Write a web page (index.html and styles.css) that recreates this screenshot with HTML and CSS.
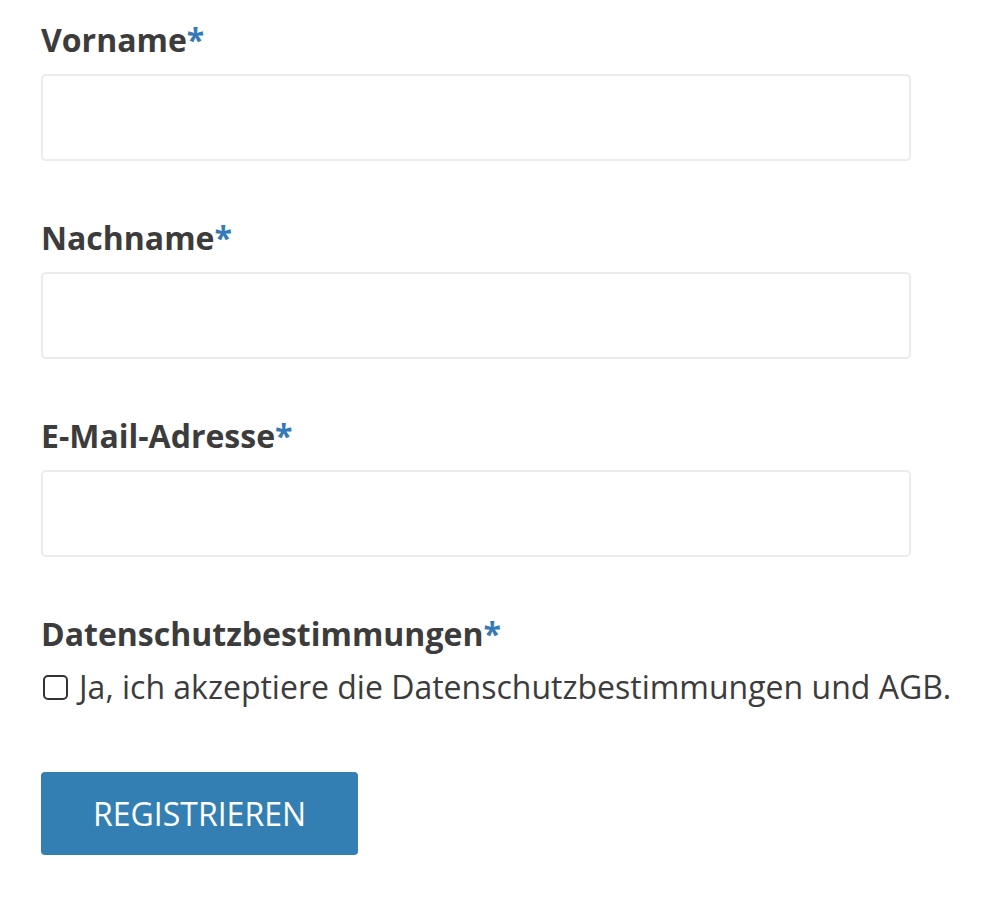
FILE: index.html
```html
<!DOCTYPE html>
<html lang="de">
<head>
<meta charset="utf-8">
<link rel="stylesheet" href="styles.css">
</head>
<body>
<form class="form">
  <div class="group">
    <label class="label">Vorname<span class="req">*</span></label>
    <input class="input" type="text">
  </div>
  <div class="group">
    <label class="label">Nachname<span class="req">*</span></label>
    <input class="input" type="text">
  </div>
  <div class="group">
    <label class="label">E-Mail-Adresse<span class="req">*</span></label>
    <input class="input" type="email">
  </div>
  <div class="group group-check">
    <div class="label">Datenschutzbestimmungen<span class="req">*</span></div>
    <label class="check"><span class="box"></span>Ja, ich akzeptiere die Datenschutzbestimmungen und AGB.</label>
  </div>
  <button class="btn" type="button">REGISTRIEREN</button>
</form>
</body>
</html>
```
FILE: styles.css
```css
html, body {
  margin: 0;
  padding: 0;
  background: #fff;
}
body {
  font-family: "Open Sans", "Liberation Sans", sans-serif;
  color: #3c3c3c;
}
.form {
  padding: 21px 0 0 41px;
  width: 870px;
}
.group {
  display: flex;
  flex-direction: column;
  margin-bottom: 58px;
}
.label {
  font-size: 32px;
  font-weight: 700;
  line-height: 38px;
  margin-bottom: 15px;
}
.req {
  color: #337ab7;
}
.input {
  box-sizing: border-box;
  height: 87px;
  width: 870px;
  border: 2px solid #ebebeb;
  border-radius: 5px;
  background: #fff;
  margin: 0;
  padding: 0 14px;
  font-size: 28px;
  outline: none;
}
.group-check .label {
  margin-bottom: 12px;
}
.check {
  display: flex;
  align-items: center;
  font-size: 32px;
  line-height: 44px;
  white-space: nowrap;
}
.box {
  box-sizing: border-box;
  width: 25px;
  height: 25px;
  border: 2.5px solid #333;
  border-radius: 5px;
  margin: 0 11px 0 2px;
  flex: none;
}
.btn {
  display: block;
  box-sizing: border-box;
  width: 317px;
  height: 83px;
  margin-top: 63px;
  border: 0;
  border-radius: 4px;
  background: #337fb4;
  color: #fff;
  font-family: "Open Sans", "Liberation Sans", sans-serif;
  font-size: 32px;
  padding: 0;
}
```
